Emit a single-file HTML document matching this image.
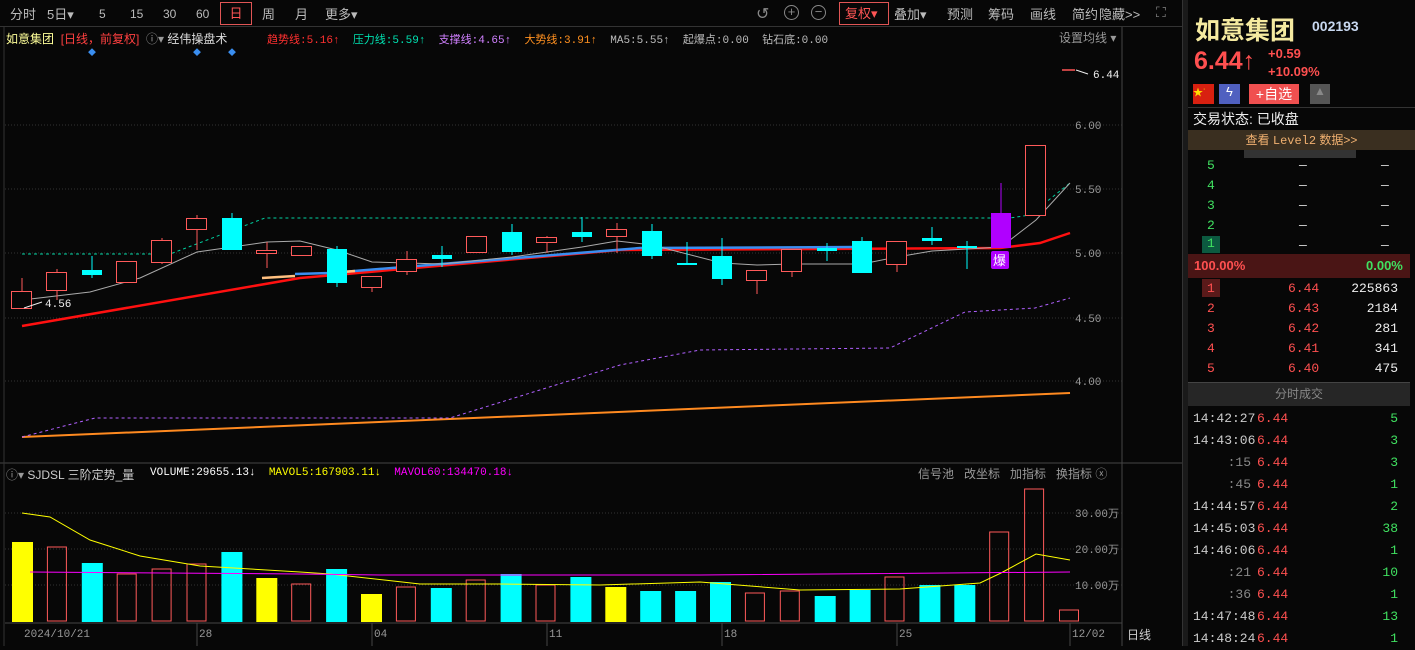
<!DOCTYPE html><html><head><meta charset="utf-8"><style>
*{margin:0;padding:0;box-sizing:border-box}
body{width:1415px;height:646px;background:#070707;overflow:hidden;font-family:"Liberation Sans","Noto Sans CJK SC",sans-serif;position:relative;color:#ccc}
.a{position:absolute;white-space:nowrap}
.m{font-family:"Liberation Mono","Noto Sans CJK SC",monospace}
.t{line-height:1;top:8px!important}
</style></head><body>
<!-- toolbar -->
<div class="a" style="left:0;top:0;width:1182px;height:27px;border-bottom:1px solid #333"></div>
<div class="a t" style="top:6px;left:10px;font-size:13px;color:#bbb">分时</div>
<div class="a t" style="top:6px;left:47px;font-size:13px;color:#bbb">5日▾</div>
<div class="a t" style="top:6px;left:99px;font-size:12px;color:#bbb">5</div>
<div class="a t" style="top:6px;left:130px;font-size:12px;color:#bbb">15</div>
<div class="a t" style="top:6px;left:163px;font-size:12px;color:#bbb">30</div>
<div class="a t" style="top:6px;left:196px;font-size:12px;color:#bbb">60</div>
<div class="a" style="top:2px;left:220px;width:32px;height:23px;border:1px solid #e05555;color:#ff5555;font-size:13px;text-align:center;line-height:21px">日</div>
<div class="a t" style="top:6px;left:262px;font-size:13px;color:#bbb">周</div>
<div class="a t" style="top:6px;left:295px;font-size:13px;color:#bbb">月</div>
<div class="a t" style="top:6px;left:325px;font-size:13px;color:#bbb">更多▾</div>
<div class="a" style="top:4px;left:756px;font-size:16px;color:#888">↺</div>
<div class="a" style="top:5px;left:784px;width:15px;height:15px;border:1.5px solid #888;border-radius:50%;font-size:13px;line-height:11px;text-align:center;color:#888">+</div>
<div class="a" style="top:5px;left:811px;width:15px;height:15px;border:1.5px solid #888;border-radius:50%;font-size:13px;line-height:11px;text-align:center;color:#888">−</div>
<div class="a" style="top:2px;left:839px;width:50px;height:23px;border:1px solid #e05555;color:#ff5555;font-size:13px;line-height:21px;padding-left:5px">复权▾</div>
<div class="a t" style="top:6px;left:894px;font-size:13px;color:#bbb">叠加▾</div>
<div class="a t" style="top:6px;left:947px;font-size:13px;color:#bbb">预测</div>
<div class="a t" style="top:6px;left:988px;font-size:13px;color:#bbb">筹码</div>
<div class="a t" style="top:6px;left:1030px;font-size:13px;color:#bbb">画线</div>
<div class="a t" style="top:6px;left:1072px;font-size:13px;color:#bbb">简约</div>
<div class="a t" style="top:6px;left:1099px;font-size:13px;color:#bbb">隐藏&gt;&gt;</div>
<div class="a" style="top:4px;left:1156px;font-size:14px;color:#888">⛶</div>
<!-- header row -->
<div class="a" style="top:30px;left:6px;font-size:12px"><span style="color:#ffff99">如意集团</span> <span style="color:#ff4040">&nbsp;[日线，前复权]</span> <span style="color:#999">&nbsp;ⓘ▾</span> <span style="color:#ddd">经伟操盘术</span></div>
<div class="a m" style="top:31px;left:267px;font-size:11px"><span style="color:#ff3030">趋势线:5.16↑</span>&nbsp; <span style="color:#00e0b0">压力线:5.59↑</span>&nbsp; <span style="color:#d080ff">支撑线:4.65↑</span>&nbsp; <span style="color:#ff9020">大势线:3.91↑</span>&nbsp; <span style="color:#bbb">MA5:5.55↑&nbsp; 起爆点:0.00&nbsp; 钻石底:0.00</span></div>
<div class="a" style="top:29px;left:1059px;font-size:12px;color:#999">设置均线 ▾</div>
<div class="a" style="top:47px;left:88px;font-size:8px;color:#3a8ef0">◆</div>
<div class="a" style="top:47px;left:193px;font-size:8px;color:#3a8ef0">◆</div>
<div class="a" style="top:47px;left:228px;font-size:8px;color:#3a8ef0">◆</div>
<svg class="a" style="left:0;top:0" width="1182" height="646">
<g stroke="#333" stroke-dasharray="1,2"><line x1="5" y1="125" x2="1122" y2="125"/><line x1="5" y1="189" x2="1122" y2="189"/><line x1="5" y1="253" x2="1122" y2="253"/><line x1="5" y1="318" x2="1122" y2="318"/><line x1="5" y1="381" x2="1122" y2="381"/>
<line x1="5" y1="513" x2="1122" y2="513"/><line x1="5" y1="549" x2="1122" y2="549"/><line x1="5" y1="585" x2="1122" y2="585"/></g>
<line x1="1122" y1="27" x2="1122" y2="646" stroke="#444"/>
<line x1="0" y1="463" x2="1182" y2="463" stroke="#444"/>
<line x1="5" y1="623" x2="1122" y2="623" stroke="#444"/>
<line x1="4" y1="27" x2="4" y2="646" stroke="#333"/>
<g stroke="#444"><line x1="197" y1="623" x2="197" y2="646"/><line x1="372" y1="623" x2="372" y2="646"/><line x1="547" y1="623" x2="547" y2="646"/><line x1="722" y1="623" x2="722" y2="646"/><line x1="897" y1="623" x2="897" y2="646"/><line x1="1070" y1="623" x2="1070" y2="646"/></g>
<g fill="#999" font-family="Liberation Mono" font-size="11"><text x="1075" y="129">6.00</text><text x="1075" y="193">5.50</text><text x="1075" y="257">5.00</text><text x="1075" y="322">4.50</text><text x="1075" y="385">4.00</text>
<text x="1075" y="517">30.00万</text><text x="1075" y="553">20.00万</text><text x="1075" y="589">10.00万</text>
<text x="24" y="637">2024/10/21</text><text x="199" y="637">28</text><text x="374" y="637">04</text><text x="549" y="637">11</text><text x="724" y="637">18</text><text x="899" y="637">25</text><text x="1072" y="637">12/02</text></g>
<polyline fill="none" stroke="#ff8a20" stroke-width="2" points="22,437 1070,393"/>
<polyline fill="none" stroke="#b060ff" stroke-width="1" stroke-dasharray="3,3" points="22,437 95,418 450,418 620,365 700,350 890,348 965,312 1035,308 1070,298"/>
<polyline fill="none" stroke="#00d0a0" stroke-width="1" stroke-dasharray="3,3" points="22,254 170,254 265,218 1010,218 1030,215 1070,183"/>
<polyline fill="none" stroke="#ff1010" stroke-width="2.5" points="22,326 300,278 620,250 1000,248 1040,243 1070,233"/>
<polyline fill="none" stroke="#ffc080" stroke-width="2.5" points="262,278 295,276"/>
<polyline fill="none" stroke="#3a8ef0" stroke-width="2.5" points="295,274 330,273 640,248 860,247"/>
<polyline fill="none" stroke="#ffc080" stroke-width="2.5" points="330,273 355,271"/>
<polyline fill="none" stroke="#aaa" stroke-width="1" points="22,300 90,292 140,278 197,252 267,242 300,241 337,250 372,262 407,263 442,264 512,257 582,247 617,241 652,245 722,263 757,265 792,264 862,264 897,257 932,251 967,249 1001,247 1036,220 1070,183"/>
<g id="c"></g>
<line x1="1062" y1="70" x2="1075" y2="70" stroke="#ff5555" stroke-width="1.5"/>
<text x="1093" y="78" fill="#eee" font-family="Liberation Mono" font-size="11">6.44</text>
<line x1="1076" y1="70" x2="1088" y2="74" stroke="#eee"/>
<text x="45" y="307" fill="#eee" font-family="Liberation Mono" font-size="11">4.56</text>
<line x1="24" y1="308" x2="42" y2="302" stroke="#eee"/>
<rect x="991" y="251" width="18" height="18" rx="2" fill="#b000ff"/><text x="993" y="265" fill="#fff" font-size="13">爆</text>
<polyline fill="none" stroke="#ffff00" stroke-width="1" points="22,513 50,517 90,540 140,556 200,566 300,572 330,574 420,584 500,584 600,585 700,582 800,590 900,589 980,583 1001,573 1036,554 1070,560"/>
<polyline fill="none" stroke="#ff00ff" stroke-width="1" points="30,572 300,574 380,575 700,575 1070,572"/>
</svg>
<div class="a" style="top:466px;left:6px;font-size:12px;color:#999">ⓘ▾ <span style="color:#ccc">SJDSL 三阶定势_量</span></div>
<div class="a m" style="top:467px;left:150px;font-size:11px"><span style="color:#fff">VOLUME:29655.13↓</span>&nbsp; <span style="color:#ffff00">MAVOL5:167903.11↓</span>&nbsp; <span style="color:#ff00ff">MAVOL60:134470.18↓</span></div>
<div class="a" style="top:465px;left:918px;font-size:12px;color:#999">信号池&nbsp;&nbsp; 改坐标&nbsp;&nbsp; 加指标&nbsp;&nbsp; 换指标 ⓧ</div>
<div class="a" style="top:626px;left:1127px;font-size:12px;color:#ccc">日线</div>
<!-- right panel -->
<div class="a" style="left:1182px;top:0;width:6px;height:646px;background:#1a1a1a;border-left:1px solid #333"></div>
<div class="a" style="top:11px;left:1195px;font-size:25px;font-weight:bold;color:#f5eaa0">如意集团</div>
<div class="a" style="top:18px;left:1312px;font-size:14px;font-weight:bold;color:#c8d8f0">002193</div>
<div class="a" style="top:47px;left:1194px;font-size:25px;font-weight:bold;color:#ff5050">6.44↑</div>
<div class="a" style="top:46px;left:1268px;font-size:13px;font-weight:bold;color:#ff5050">+0.59</div>
<div class="a" style="top:64px;left:1268px;font-size:13px;font-weight:bold;color:#ff5050">+10.09%</div>
<div class="a" style="top:84px;left:1193px;width:21px;height:20px;background:#d82010;color:#ffdd00;font-size:10px;line-height:20px">★˙</div>
<div class="a" style="top:84px;left:1219px;width:21px;height:20px;background:#5060c0;color:#fff;font-size:13px;text-align:center">ϟ</div>
<div class="a" style="top:84px;left:1249px;width:50px;height:20px;background:#f05050;color:#fff;font-size:14px;text-align:center;line-height:20px">+自选</div>
<div class="a" style="top:84px;left:1310px;width:20px;height:20px;background:#555;color:#888;font-size:12px;text-align:center">▲</div>
<div class="a" style="top:107px;left:1188px;width:227px;border-top:1px solid #333"></div>
<div class="a" style="top:109px;left:1193px;font-size:14px;color:#eee">交易状态: 已收盘</div>
<div class="a" style="top:130px;left:1188px;width:227px;height:20px;background:#3a2f20;color:#f0b070;font-size:12px;text-align:center;line-height:20px">查看 <span class="m">Level2</span> 数据&gt;&gt;</div>
<div class="a" style="top:150px;left:1244px;width:112px;height:8px;background:#333"></div>
<div class="a m" style="top:156px;left:1207px;font-size:13px;color:#40e060;line-height:20px">5<br>4<br>3<br>2</div>
<div class="a" style="top:236px;left:1202px;width:18px;height:17px;background:#0c5a40"></div>
<div class="a m" style="top:236px;left:1207px;font-size:13px;color:#40e060">1</div>
<div class="a m" style="top:156px;left:1299px;font-size:13px;color:#ddd;line-height:20px">—<br>—<br>—<br>—<br>—</div>
<div class="a m" style="top:156px;left:1381px;font-size:13px;color:#ddd;line-height:20px">—<br>—<br>—<br>—<br>—</div>
<div class="a" style="top:254px;left:1188px;width:222px;height:24px;background:#4a1515"></div>
<div class="a" style="top:258px;left:1194px;font-size:13px;font-weight:bold;color:#ff5050">100.00%</div>
<div class="a" style="top:258px;left:1366px;font-size:13px;font-weight:bold;color:#40e060">0.00%</div>
<div class="a" style="top:279px;left:1202px;width:18px;height:18px;background:#5a1a1a"></div>
<div class="a m" style="top:279px;left:1207px;font-size:13px;color:#ff5050;line-height:20px">1<br>2<br>3<br>4<br>5</div>
<div class="a m" style="top:279px;left:1288px;font-size:13px;color:#ff5050;line-height:20px">6.44<br>6.43<br>6.42<br>6.41<br>6.40</div>
<div class="a m" style="top:279px;left:1330px;width:68px;font-size:13px;color:#eee;line-height:20px;text-align:right">225863<br>2184<br>281<br>341<br>475</div>
<div class="a" style="top:382px;left:1188px;width:222px;height:24px;background:#262626;border-top:1px solid #444;color:#888;font-size:12px;text-align:center;line-height:23px">分时成交</div>
<div class="a m" style="top:408px;left:1193px;font-size:13px;color:#ccc;line-height:22px;text-align:right;width:58px">14:42:27<br>14:43:06<br><span style="color:#888">:15</span><br><span style="color:#888">:45</span><br>14:44:57<br>14:45:03<br>14:46:06<br><span style="color:#888">:21</span><br><span style="color:#888">:36</span><br>14:47:48<br>14:48:24</div>
<div class="a m" style="top:408px;left:1257px;font-size:13px;color:#ff5050;line-height:22px">6.44<br>6.44<br>6.44<br>6.44<br>6.44<br>6.44<br>6.44<br>6.44<br>6.44<br>6.44<br>6.44</div>
<div class="a m" style="top:408px;left:1360px;width:38px;font-size:13px;color:#40e060;line-height:22px;text-align:right">5<br>3<br>3<br>1<br>2<br>38<br>1<br>10<br>1<br>13<br>1</div>
<script>
var C=[[22,'r',291,308,278,308],[57,'r',272,290,269,300],[92,'c',270,275,256,278],[127,'r',261,282,261,282],[162,'r',240,262,238,264],[197,'r',218,229,215,250],[232,'c',218,250,213,250],[267,'r',250,253,242,268],[302,'r',246,255,246,255],[337,'c',249,283,246,287],[372,'r',276,287,276,292],[407,'r',259,271,251,275],[442,'c',255,259,246,267],[477,'r',236,252,236,252],[512,'c',232,252,224,255],[547,'r',237,242,236,253],[582,'c',232,237,217,242],[617,'r',229,236,223,253],[652,'c',231,256,224,259],[687,'c',263,265,242,265],[722,'c',256,279,238,285],[757,'r',270,280,270,294],[792,'r',249,271,249,277],[827,'c',248,251,243,261],[862,'c',241,273,237,273],[897,'r',241,264,241,272],[932,'c',238,241,227,245],[967,'c',246,248,241,269],[1001,'p',213,248,183,248],[1036,'r',145,215,145,215]];
var V=[['y',542],['r',547],['c',563],['r',574],['r',569],['r',564],['c',552],['y',578],['r',584],['c',569],['y',594],['r',587],['c',588],['r',580],['c',574],['r',585],['c',577],['y',587],['c',591],['c',591],['c',582],['r',593],['r',591],['c',596],['c',590],['r',577],['c',585],['c',585],['r',532],['r',489],['r',610]];
var s='',col={r:'#ff5a5a',c:'#00ffff',p:'#b000ff',y:'#ffff00'};
C.forEach(function(d){var x=d[0],k=col[d[1]];s+='<line x1="'+x+'" y1="'+d[4]+'" x2="'+x+'" y2="'+d[5]+'" stroke="'+k+'"/>';
if(d[1]=='r')s+='<rect x="'+(x-10.5)+'" y="'+(d[2]+.5)+'" width="20" height="'+Math.max(d[3]-d[2],1)+'" fill="#070707" stroke="'+k+'"/>';
else s+='<rect x="'+(x-10)+'" y="'+d[2]+'" width="20" height="'+Math.max(d[3]-d[2],2)+'" fill="'+k+'"/>';});
V.forEach(function(d,i){var x=22+i*34.9,k=col[d[0]];
if(d[0]=='r')s+='<rect x="'+(x-9.5)+'" y="'+d[1]+'" width="19" height="'+(621-d[1])+'" fill="none" stroke="'+k+'"/>';
else s+='<rect x="'+(x-10)+'" y="'+d[1]+'" width="21" height="'+(622-d[1])+'" fill="'+k+'"/>';});
document.getElementById('c').innerHTML=s;
</script>
</body></html>
